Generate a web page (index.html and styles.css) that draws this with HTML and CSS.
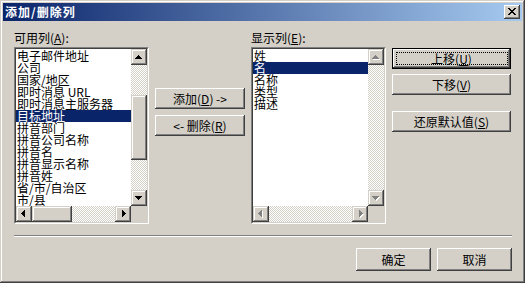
FILE: index.html
```html
<!DOCTYPE html>
<html lang="zh-CN">
  <head>
    <meta charset="UTF-8" />
    <title>添加/删除列</title>
    <link rel="stylesheet" href="styles.css">
  </head>
  <body>
    <div class="window">
      <div class="titlebar">
        <span class="title">添加/删除列</span>
        <div class="close-btn">
          <svg width="16" height="14" viewBox="0 0 16 14" shape-rendering="crispEdges">
            <g fill="#000">
              <rect x="4" y="3" width="2" height="1"/><rect x="10" y="3" width="2" height="1"/>
              <rect x="5" y="4" width="2" height="1"/><rect x="9" y="4" width="2" height="1"/>
              <rect x="6" y="5" width="4" height="1"/>
              <rect x="7" y="6" width="2" height="1"/>
              <rect x="6" y="7" width="4" height="1"/>
              <rect x="5" y="8" width="2" height="1"/><rect x="9" y="8" width="2" height="1"/>
              <rect x="4" y="9" width="2" height="1"/><rect x="10" y="9" width="2" height="1"/>
            </g>
          </svg>
        </div>
      </div>

      <div class="body">
        <div class="columns">
          <!-- available columns -->
          <div class="list-col">
            <div class="label">可用列(<u>A</u>):</div>
            <div class="listbox">
              <div class="listbox-inner">
                <ul class="items">
                  <li>电子邮件地址</li>
                  <li>公司</li>
                  <li>国家/地区</li>
                  <li>即时消息 URL</li>
                  <li>即时消息主服务器</li>
                  <li class="selected">目标地址</li>
                  <li>拼音部门</li>
                  <li>拼音公司名称</li>
                  <li>拼音名</li>
                  <li>拼音显示名称</li>
                  <li>拼音姓</li>
                  <li>省/市/自治区</li>
                  <li>市/县</li>
                  <li>手机</li>
                </ul>
                <div class="vscroll">
                  <div class="scroll-btn">
                    <svg width="16" height="16" shape-rendering="crispEdges"><g fill="#000"><rect x="7" y="6" width="1" height="1"/><rect x="6" y="7" width="3" height="1"/><rect x="5" y="8" width="5" height="1"/><rect x="4" y="9" width="7" height="1"/></g></svg>
                  </div>
                  <div class="track" style="height: 30px"></div>
                  <div class="thumb" style="height: 65px"></div>
                  <div class="track fill"></div>
                  <div class="scroll-btn">
                    <svg width="16" height="16" shape-rendering="crispEdges"><g fill="#000"><rect x="4" y="6" width="7" height="1"/><rect x="5" y="7" width="5" height="1"/><rect x="6" y="8" width="3" height="1"/><rect x="7" y="9" width="1" height="1"/></g></svg>
                  </div>
                </div>
                <div class="hscroll">
                  <div class="scroll-btn">
                    <svg width="16" height="16" shape-rendering="crispEdges"><g fill="#000"><rect x="5" y="7" width="1" height="1"/><rect x="6" y="6" width="1" height="3"/><rect x="7" y="5" width="1" height="5"/><rect x="8" y="4" width="1" height="7"/></g></svg>
                  </div>
                  <div class="thumb" style="width: 40px"></div>
                  <div class="track fill"></div>
                  <div class="scroll-btn">
                    <svg width="16" height="16" shape-rendering="crispEdges"><g fill="#000"><rect x="7" y="4" width="1" height="7"/><rect x="8" y="5" width="1" height="5"/><rect x="9" y="6" width="1" height="3"/><rect x="10" y="7" width="1" height="1"/></g></svg>
                  </div>
                </div>
                <div class="corner"></div>
              </div>
            </div>
          </div>

          <!-- add / remove -->
          <div class="mid-col">
            <div class="btn">添加(<u>D</u>) -&gt;</div>
            <div class="btn">&lt;- 删除(<u>R</u>)</div>
          </div>

          <!-- shown columns -->
          <div class="list-col">
            <div class="label">显示列(<u>E</u>):</div>
            <div class="listbox">
              <div class="listbox-inner">
                <ul class="items">
                  <li>姓</li>
                  <li class="selected">名</li>
                  <li>名称</li>
                  <li>类型</li>
                  <li>描述</li>
                </ul>
                <div class="vscroll">
                  <div class="scroll-btn">
                    <svg width="16" height="16" shape-rendering="crispEdges"><g fill="#fff"><rect x="8" y="7" width="1" height="1"/><rect x="7" y="8" width="3" height="1"/><rect x="6" y="9" width="5" height="1"/><rect x="5" y="10" width="7" height="1"/></g><g fill="#808080"><rect x="7" y="6" width="1" height="1"/><rect x="6" y="7" width="3" height="1"/><rect x="5" y="8" width="5" height="1"/><rect x="4" y="9" width="7" height="1"/></g></svg>
                  </div>
                  <div class="track fill"></div>
                  <div class="scroll-btn">
                    <svg width="16" height="16" shape-rendering="crispEdges"><g fill="#fff"><rect x="5" y="7" width="7" height="1"/><rect x="6" y="8" width="5" height="1"/><rect x="7" y="9" width="3" height="1"/><rect x="8" y="10" width="1" height="1"/></g><g fill="#808080"><rect x="4" y="6" width="7" height="1"/><rect x="5" y="7" width="5" height="1"/><rect x="6" y="8" width="3" height="1"/><rect x="7" y="9" width="1" height="1"/></g></svg>
                  </div>
                </div>
                <div class="hscroll">
                  <div class="scroll-btn">
                    <svg width="16" height="16" shape-rendering="crispEdges"><g fill="#fff"><rect x="6" y="8" width="1" height="1"/><rect x="7" y="7" width="1" height="3"/><rect x="8" y="6" width="1" height="5"/><rect x="9" y="5" width="1" height="7"/></g><g fill="#808080"><rect x="5" y="7" width="1" height="1"/><rect x="6" y="6" width="1" height="3"/><rect x="7" y="5" width="1" height="5"/><rect x="8" y="4" width="1" height="7"/></g></svg>
                  </div>
                  <div class="track fill"></div>
                  <div class="scroll-btn">
                    <svg width="16" height="16" shape-rendering="crispEdges"><g fill="#fff"><rect x="8" y="5" width="1" height="7"/><rect x="9" y="6" width="1" height="5"/><rect x="10" y="7" width="1" height="3"/><rect x="11" y="8" width="1" height="1"/></g><g fill="#808080"><rect x="7" y="4" width="1" height="7"/><rect x="8" y="5" width="1" height="5"/><rect x="9" y="6" width="1" height="3"/><rect x="10" y="7" width="1" height="1"/></g></svg>
                  </div>
                </div>
                <div class="corner"></div>
              </div>
            </div>
          </div>

          <!-- ordering -->
          <div class="side-col">
            <div class="btn default">上移(<u>U</u>)</div>
            <div class="btn">下移(<u>V</u>)</div>
            <div class="btn reset">还原默认值(<u>S</u>)</div>
          </div>
        </div>

        <div class="separator"></div>

        <div class="footer">
          <div class="btn">确定</div>
          <div class="btn">取消</div>
        </div>
      </div>
    </div>
  </body>
</html>
```

FILE: styles.css
```css
* {
  box-sizing: border-box;
}

body {
  margin: 0;
  background-color: #d4d0c8;
  font-family: "Noto Sans CJK SC", "Liberation Sans", sans-serif;
  font-size: 12px;
  color: #000;
}

.window {
  width: 525px;
  height: 283px;
  padding: 3px;
  display: flex;
  flex-direction: column;
  background-color: #d4d0c8;
  box-shadow: inset -1px -1px #404040, inset 1px 1px #d4d0c8,
    inset -2px -2px #808080, inset 2px 2px #fff;
}

.titlebar {
  height: 18px;
  flex: none;
  display: flex;
  align-items: center;
  justify-content: space-between;
  padding: 0 2px 0 2px;
  background: linear-gradient(to right, #0a246a, #a6caf0);
}

.title {
  color: #fff;
  font-weight: bold;
  font-size: 12px;
  letter-spacing: 1px;
  line-height: 14px;
}

.close-btn {
  width: 16px;
  height: 14px;
  background-color: #d4d0c8;
  box-shadow: inset -1px -1px #404040, inset 1px 1px #fff,
    inset -2px -2px #808080;
}

.close-btn svg {
  display: block;
}

.body {
  flex: 1;
  display: flex;
  flex-direction: column;
  padding: 10px 11px 0 11px;
}

.columns {
  display: flex;
  align-items: flex-start;
  gap: 6px;
}

.list-col {
  width: 135px;
  flex: none;
}

.label {
  height: 16px;
  line-height: 14px;
}

.listbox {
  height: 177px;
  border: 1px solid;
  border-color: #808080 #fff #fff #808080;
}

.listbox-inner {
  height: 100%;
  border: 1px solid;
  border-color: #404040 #d4d0c8 #d4d0c8 #404040;
  background-color: #fff;
  display: grid;
  grid-template-columns: 1fr 16px;
  grid-template-rows: 1fr 16px;
}

.items {
  list-style: none;
  margin: 0;
  padding: 1px 0 0 0;
  overflow: hidden;
}

.items li {
  height: 12px;
  line-height: 12px;
  padding-left: 1px;
  white-space: nowrap;
}

.items li.selected {
  background-color: #0a246a;
  color: #fff;
}

.vscroll {
  display: flex;
  flex-direction: column;
}

.hscroll {
  display: flex;
}

.track {
  flex: none;
  background: repeating-conic-gradient(#d4d0c8 0 25%, #fff 0 50%) 0 0 / 2px 2px;
}

.track.fill {
  flex: 1;
}

.scroll-btn,
.thumb {
  flex: none;
  background-color: #d4d0c8;
  box-shadow: inset -1px -1px #404040, inset 1px 1px #d4d0c8,
    inset -2px -2px #808080, inset 2px 2px #fff;
}

.scroll-btn {
  width: 16px;
  height: 16px;
}

.scroll-btn svg {
  display: block;
}

.corner {
  background-color: #d4d0c8;
}

.btn {
  position: relative;
  height: 21px;
  display: flex;
  align-items: center;
  justify-content: center;
  line-height: 1;
  background-color: #d4d0c8;
  box-shadow: inset -1px -1px #404040, inset 1px 1px #fff,
    inset -2px -2px #808080;
  white-space: nowrap;
}

.btn u {
  text-decoration-thickness: 1px;
}

.btn.default {
  box-shadow: inset 0 0 0 1px #000, inset -2px -2px #404040,
    inset 2px 2px #fff, inset -3px -3px #808080;
}

.btn.default::after {
  content: "";
  position: absolute;
  top: 4px;
  left: 4px;
  right: 3px;
  bottom: 4px;
  border: 1px dotted #000;
}

.mid-col {
  width: 90px;
  flex: none;
  display: flex;
  flex-direction: column;
  gap: 6px;
  padding-top: 57px;
}

.side-col {
  width: 119px;
  flex: none;
  display: flex;
  flex-direction: column;
  gap: 5px;
  padding-top: 17px;
}

.side-col .reset {
  margin-top: 11px;
}

.separator {
  height: 2px;
  margin-top: 11px;
  margin-right: -1px;
  border-top: 1px solid #808080;
  border-bottom: 1px solid #fff;
}

.footer {
  display: flex;
  justify-content: flex-end;
  gap: 6px;
  margin-top: 11px;
  margin-right: -1px;
}

.footer .btn {
  width: 75px;
  height: 23px;
}
```
